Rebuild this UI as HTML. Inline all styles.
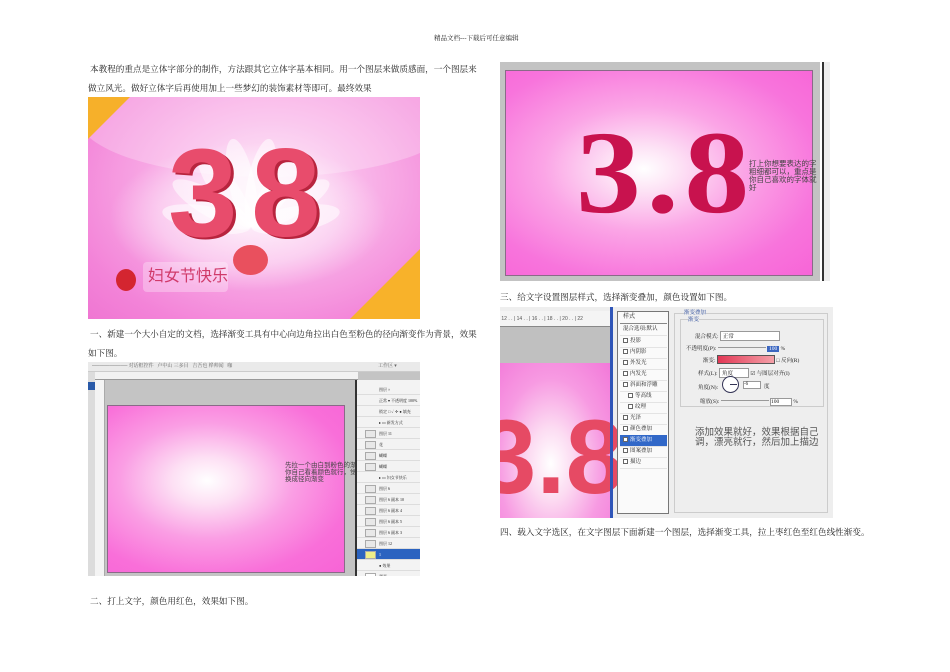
<!DOCTYPE html>
<html><head><meta charset="utf-8"><style>
*{margin:0;padding:0;box-sizing:border-box}
body{width:950px;height:672px;background:#fff;position:relative;overflow:hidden;font-family:"Liberation Serif","Noto Serif CJK SC",serif;color:#222}
.a{position:absolute}
.t{position:absolute;font-size:8.6px;white-space:nowrap;line-height:10px}
.pink{background:radial-gradient(ellipse at 42% 45%,#fff 0%,#fde0f4 18%,#fa9ee4 45%,#f96fd9 75%,#f764d6 100%)}
.lay{position:absolute;left:0;width:64px;height:11px;border-bottom:1px solid #ddd;font-size:4px;line-height:11px;padding-left:22px;background:#f3f3f3}
.lay i{position:absolute;left:8px;top:2px;width:11px;height:8px;border:1px solid #aaa;background:#e8e8e8}
.st{position:absolute;left:2px;width:47px;height:11.5px;font-size:5.5px;line-height:11px;padding-left:3px;border-bottom:1px solid #e4e4e4}
.st b{display:inline-block;width:5px;height:5px;border:1px solid #666;margin-right:2px;vertical-align:-1px;background:#fff}
.pe{position:absolute;width:26px;height:90px;border-radius:50%;background:rgba(255,255,255,.55);transform-origin:50% 100%}
</style></head><body>
<div class="t" style="left:434px;top:34px;font-size:6.5px">精品文档---下载后可任意编辑</div>

<div class="t" style="left:90px;top:64px">本教程的重点是立体字部分的制作，方法跟其它立体字基本相同。用一个图层来做质感面，一个图层来</div>
<div class="t" style="left:88px;top:83px">做立风光。做好立体字后再使用加上一些梦幻的装饰素材等即可。最终效果</div>

<!-- image 1 -->
<div class="a" style="left:88px;top:97px;width:332px;height:222px;overflow:hidden;background:radial-gradient(ellipse at 55% 40%,#fde4f6 0%,#f9b6e9 35%,#f383d8 80%,#ef76d2 100%)">
 <div class="a" style="left:-10px;top:-40px;width:380px;height:120px;border-radius:50%;background:rgba(255,255,255,.25)"></div>
 <div class="a" style="left:0;top:0;width:0;height:0;border-top:42px solid #f6b02a;border-right:42px solid transparent"></div>
 <div class="a" style="right:0;bottom:0;width:0;height:0;border-bottom:70px solid #f8b22a;border-left:70px solid transparent"></div>
 <div class="pe" style="left:150px;top:40px;transform:rotate(-60deg)"></div>
 <div class="pe" style="left:150px;top:40px;transform:rotate(-35deg)"></div>
 <div class="pe" style="left:150px;top:40px;transform:rotate(-12deg)"></div>
 <div class="pe" style="left:150px;top:40px;transform:rotate(12deg)"></div>
 <div class="pe" style="left:150px;top:40px;transform:rotate(35deg)"></div>
 <div class="pe" style="left:150px;top:40px;transform:rotate(60deg)"></div>
 <div class="pe" style="left:150px;top:40px;transform:rotate(-80deg)"></div>
 <div class="pe" style="left:150px;top:40px;transform:rotate(80deg)"></div>
 <div class="a" style="left:20px;top:45px;width:280px;height:150px;border-radius:50%;background:radial-gradient(ellipse,rgba(255,255,255,.7) 0%,rgba(255,255,255,.4) 45%,rgba(255,255,255,0) 70%)"></div>
 <div class="a" style="left:80px;top:34px;font:bold 125px/1 'Liberation Sans',sans-serif;color:#e84c6c;letter-spacing:-8px;text-shadow:3px 2px 0 #b8243e">3</div>
 <div class="a" style="left:163px;top:34px;font:bold 125px/1 'Liberation Sans',sans-serif;color:#e84c6c;text-shadow:3px 2px 0 #b8243e">8</div>
 <div class="a" style="left:145px;top:148px;width:35px;height:30px;border-radius:50%;background:#e9505e"></div>
 <div class="a" style="left:55px;top:165px;width:85px;height:30px;border-radius:4px;background:rgba(255,255,255,.3);font:16px/30px 'Liberation Sans','Noto Sans CJK SC',sans-serif;color:#d03a6a;padding-left:5px">妇女节快乐</div>
 <div class="a" style="left:28px;top:172px;width:20px;height:22px;border-radius:50%;background:#d42530"></div>
</div>

<div class="t" style="left:90px;top:329px">一、新建一个大小自定的文档，选择渐变工具有中心向边角拉出白色至粉色的径向渐变作为背景，效果</div>
<div class="t" style="left:88px;top:348px">如下图。</div>

<!-- image 2 -->
<div class="a" style="left:88px;top:362px;width:332px;height:214px;background:#c4c4c4;overflow:hidden">
 <div class="a" style="left:0;top:0;width:332px;height:10px;background:#eaeaea;border-bottom:1px solid #ccc;font-size:5px;line-height:10px;color:#666;padding-left:4px">────────── 对话框控件 &nbsp; 卢中山 三多目 &nbsp; 吉吾也 桦帅闻 &nbsp; 咖 <span style="position:absolute;left:290px">工作区 ▾</span></div>
 <div class="a" style="left:0;top:10px;width:270px;height:8px;background:#f2f2f2;border-bottom:1px solid #999"></div>
 <div class="a" style="left:0;top:10px;width:7px;height:204px;background:#dcdcdc"></div>
 <div class="a" style="left:0;top:20px;width:7px;height:8px;background:#2a5aa8"></div>
 <div class="a" style="left:7px;top:18px;width:10px;height:196px;background:#f4f4f4;border-right:1px solid #aaa"></div>
 <div class="a pink" style="left:19px;top:43px;width:238px;height:168px;border:1px solid #8a6a88"></div>
 <div class="a" style="left:197px;top:100px;font:6.5px/7px 'Liberation Sans','Noto Sans CJK SC',sans-serif;color:#444;white-space:nowrap">先拉一个由白到粉色的渐变<br>你自己看着颜色就行，觉得漂亮就行<br>换成径向渐变</div>
 <div class="a" style="left:267px;top:18px;width:65px;height:196px;background:#f3f3f3;border-left:2px solid #333"></div>
 <div class="a" style="left:269px;top:18px;width:63px;height:196px">
  <div class="lay" style="top:4px;font-size:4px">图层 × </div>
  <div class="lay" style="top:15px">正常 ▾ 不透明度 100%</div>
  <div class="lay" style="top:26px">锁定 □ ✓ ✢ ● 填充 100%</div>
  <div class="lay" style="top:37px">▸ ▭ 新发方式</div>
  <div class="lay" style="top:48px"><i></i>图层 11</div>
  <div class="lay" style="top:59px"><i></i>花</div>
  <div class="lay" style="top:70px"><i></i>蝴蝶</div>
  <div class="lay" style="top:81px"><i></i>蝴蝶</div>
  <div class="lay" style="top:92px">▸ ▭ 妇女节快乐</div>
  <div class="lay" style="top:103px"><i></i>图层 6</div>
  <div class="lay" style="top:114px"><i></i>图层 6 副本 10</div>
  <div class="lay" style="top:125px"><i></i>图层 6 副本 4</div>
  <div class="lay" style="top:136px"><i></i>图层 6 副本 5</div>
  <div class="lay" style="top:147px"><i></i>图层 6 副本 3</div>
  <div class="lay" style="top:158px"><i></i>图层 12</div>
  <div class="lay" style="top:169px;background:#2b63c0;color:#fff"><i style="background:#eeee88"></i>1</div>
  <div class="lay" style="top:180px">● 效果</div>
  <div class="lay" style="top:191px"><i style="background:#fff"></i>背景</div>
 </div>
</div>

<div class="t" style="left:90px;top:596px">二、打上文字，颜色用红色，效果如下图。</div>

<!-- image 3 -->
<div class="a" style="left:500px;top:62px;width:320px;height:219px;background:#c3c3c3;overflow:hidden">
 <div class="a pink" style="left:5px;top:8px;width:308px;height:206px;border:1px solid #8a6a88;background:radial-gradient(ellipse at 45% 48%,#fff 0%,#fde2f5 15%,#fba5e6 42%,#f874dc 75%,#f765d7 100%)"></div>
 <div class="a" style="left:76px;top:52px;font:bold 118px/1 'Liberation Serif',serif;color:#c8124e;letter-spacing:5px;transform:scaleX(1.1);transform-origin:0 0">3.8</div>
 <div class="a" style="left:249px;top:98px;font:7.5px/8px 'Liberation Sans','Noto Sans CJK SC',sans-serif;color:#444;white-space:nowrap">打上你想要表达的字<br>粗细都可以，重点是<br>你自己喜欢的字体就<br>好</div>
</div>
<div class="a" style="left:822px;top:62px;width:2px;height:219px;background:#333"></div>
<div class="a" style="left:824px;top:62px;width:6px;height:219px;background:#eee"></div>

<div class="t" style="left:500px;top:292px">三、给文字设置图层样式，选择渐变叠加，颜色设置如下图。</div>

<!-- image 4 -->
<div class="a" style="left:500px;top:307px;width:333px;height:211px;background:#eeeeee;overflow:hidden">
 <div class="a" style="left:0;top:4px;width:113px;height:16px;background:#f4f4f4;border-bottom:1px solid #888;font:5px/16px sans-serif;color:#555">&nbsp;12 . . | 14 . . | 16 . . | 18 . . | 20 . . | 22</div>
 <div class="a" style="left:0;top:20px;width:113px;height:36px;background:#c0c0c0"></div>
 <div class="a" style="left:0;top:56px;width:113px;height:155px;background:radial-gradient(ellipse at 45% 65%,#fff 0%,#fcdcf2 25%,#f79ae2 60%,#f276d8 100%)"></div>
 <div class="a" style="left:-22px;top:98px;font:bold 105px/1 'Liberation Sans',sans-serif;color:#e64a64;letter-spacing:0px">3.8</div>
 <div class="a" style="left:110px;top:0;width:3px;height:211px;background:#2f55b8"></div>
 <div class="a" style="left:117px;top:4px;width:52px;height:203px;background:#fafafa;border:1px solid #777">
  <div class="st" style="top:0;font-size:6px;border-bottom:1px solid #888">样式</div>
  <div class="st" style="top:12px">混合选项:默认</div>
  <div class="st" style="top:24px"><b></b>投影</div>
  <div class="st" style="top:35px"><b></b>内阴影</div>
  <div class="st" style="top:46px"><b></b>外发光</div>
  <div class="st" style="top:57px"><b></b>内发光</div>
  <div class="st" style="top:68px"><b></b>斜面和浮雕</div>
  <div class="st" style="top:79px;padding-left:8px"><b></b>等高线</div>
  <div class="st" style="top:90px;padding-left:8px"><b></b>纹理</div>
  <div class="st" style="top:101px"><b></b>光泽</div>
  <div class="st" style="top:112px"><b></b>颜色叠加</div>
  <div class="st" style="top:123px;background:#3168c8;color:#fff"><b></b>渐变叠加</div>
  <div class="st" style="top:134px"><b></b>图案叠加</div>
  <div class="st" style="top:145px"><b></b>描边</div>
 </div>
 <div class="a" style="left:174px;top:6px;width:154px;height:200px;border:1px solid #ccc"></div>
 <div class="a" style="left:184px;top:1px;font-size:5.5px;background:#eee;color:#2a4a9a">渐变叠加</div>
 <div class="a" style="left:180px;top:12px;width:144px;height:88px;border:1px solid #ccc"></div>
 <div class="a" style="left:188px;top:8px;font-size:5.5px;background:#eee;color:#2a4a9a">渐变</div>
 <div class="a" style="left:195px;top:24px;font-size:5.5px;white-space:nowrap">混合模式: <span style="display:inline-block;width:60px;border:1px solid #999;background:#fff;padding-left:2px">正常</span></div>
 <div class="a" style="left:186px;top:37px;font-size:5.5px;white-space:nowrap">不透明度(P): <span style="display:inline-block;width:48px;border-top:1px solid #999;vertical-align:2px"></span> <span style="background:#3b66c0;color:#fff;padding:0 2px">100</span> %</div>
 <div class="a" style="left:203px;top:48px;font-size:5.5px;white-space:nowrap">渐变: <span style="display:inline-block;width:58px;height:9px;background:linear-gradient(90deg,#e23855,#f4a0a8);border:1px solid #555;vertical-align:-2px"></span> □ 反向(R)</div>
 <div class="a" style="left:198px;top:61px;font-size:5.5px;white-space:nowrap">样式(L): <span style="display:inline-block;width:30px;border:1px solid #999;background:#fff;padding-left:2px">角度</span> ☑ 与图层对齐(I)</div>
 <div class="a" style="left:198px;top:76px;font-size:5.5px">角度(N):</div>
 <div class="a" style="left:222px;top:69px;width:17px;height:17px;border:1px solid #335;border-radius:50%;background:#fff"></div>
 <div class="a" style="left:230px;top:77px;width:7px;height:1px;background:#335"></div>
 <div class="a" style="left:243px;top:74px;width:18px;height:8px;border:1px solid #999;background:#fff;font-size:5px">-6</div>
 <div class="a" style="left:264px;top:75px;font-size:5.5px">度</div>
 <div class="a" style="left:200px;top:90px;font-size:5.5px;white-space:nowrap">缩放(S): <span style="display:inline-block;width:48px;border-top:1px solid #999;vertical-align:2px"></span> <span style="display:inline-block;width:22px;border:1px solid #999;background:#fff">100</span> %</div>
 <div class="a" style="left:195px;top:121px;font:9.5px/10px 'Liberation Sans','Noto Sans CJK SC',sans-serif;color:#555;white-space:nowrap">添加效果就好，效果根据自己<br>调，漂亮就行，然后加上描边</div>
</div>

<div class="t" style="left:500px;top:527px">四、载入文字选区，在文字图层下面新建一个图层，选择渐变工具，拉上枣红色至红色线性渐变。</div>
</body></html>
